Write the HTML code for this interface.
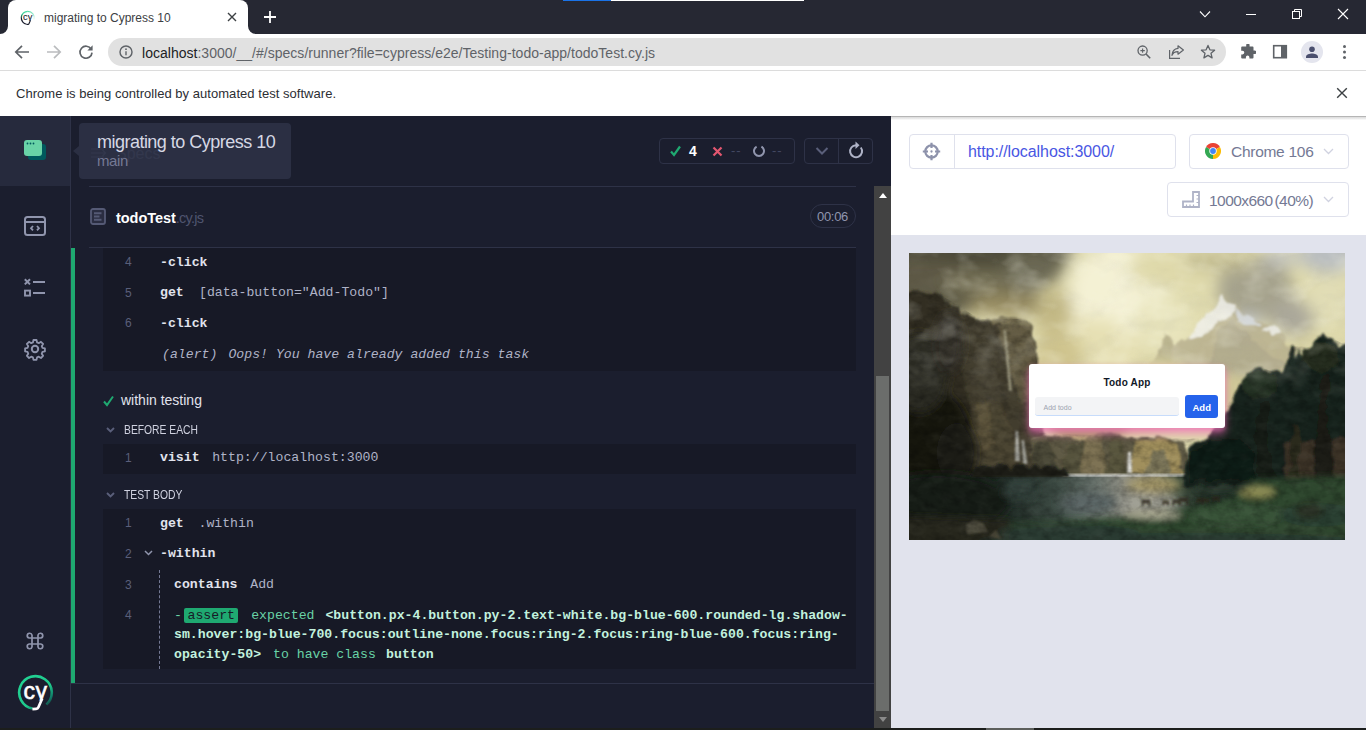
<!DOCTYPE html>
<html lang="en">
<head>
<meta charset="utf-8">
<title>migrating to Cypress 10</title>
<style>
*{box-sizing:border-box;margin:0;padding:0}
html,body{width:1366px;height:730px;overflow:hidden;background:#fff}
body{position:relative;font-family:"Liberation Sans",sans-serif;color:#202124}
.a{position:absolute}
.t{position:absolute;white-space:nowrap;line-height:1}
.mono{font-family:"Liberation Mono",monospace;font-size:13px}
/* chrome frame */
#titlebar{left:0;top:0;width:1366px;height:34px;background:#262833}
#tab{left:8px;top:0;width:240px;height:34px;background:#fff;border-radius:8px 8px 0 0}
#toolbar{left:0;top:34px;width:1366px;height:37px;background:#fff;border-bottom:1px solid #dcdcdc}
#omni{left:108px;top:38px;width:1118px;height:28px;border-radius:14px;background:#e1e1e1}
#infobar{left:0;top:71px;width:1366px;height:45px;background:#fff}
/* cypress */
#nav{left:0;top:116px;width:71px;height:612px;background:#1b1e2e;border-right:1px solid #2e3247}
#navsel{left:0;top:116px;width:70px;height:70px;background:#262a3d}
#rep{left:71px;top:116px;width:820px;height:612px;background:#1b1e2e}
.blk{position:absolute;left:103px;width:753px;background:#171926}
.num{position:absolute;font-size:12px;color:#5a5f7a;line-height:1;font-family:"Liberation Sans",sans-serif}
.cmd{position:absolute;white-space:nowrap;line-height:1;font-family:"Liberation Mono",monospace;font-size:13.200px;color:#afb3c7}
.cmd b{color:#e1e3ed;font-weight:bold}
.hl{position:absolute;height:1px;background:#2e3247}
#aut{left:891px;top:116px;width:475px;height:612px;background:#e1e3ed}
#authead{left:891px;top:116px;width:475px;height:119px;background:#fff}
.box{position:absolute;border:1px solid #dfe1ec;border-radius:4px;background:#fff}
#bottom{left:0;top:727.500px;width:1366px;height:2.500px;background:#1c1e1c}
</style>
</head>
<body>
<!-- ===== Chrome title bar ===== -->
<div id="titlebar" class="a"></div>
<div class="a" style="left:563px;top:0;width:48px;height:1px;background:#1a73e8"></div>
<div class="a" style="left:611px;top:0;width:193px;height:1px;background:#fff"></div>
<div id="tab" class="a"></div>
<div id="toolbar" class="a"></div>
<div id="omni" class="a"></div>
<div id="infobar" class="a"></div>


<!-- tab curves -->
<svg class="a" style="left:0;top:26px" width="8" height="8"><path d="M8 0V8H0A8 8 0 0 0 8 0Z" fill="#fff"/></svg>
<svg class="a" style="left:248px;top:26px" width="8" height="8"><path d="M0 0V8H8A8 8 0 0 1 0 0Z" fill="#fff"/></svg>
<!-- favicon -->
<svg class="a" style="left:20.2px;top:9.5px" width="16" height="16" viewBox="0 0 40 40"><defs><linearGradient id="fv1" gradientUnits="userSpaceOnUse" x1="0" y1="36" x2="0" y2="3"><stop offset="0" stop-color="#1b1e2e"/><stop offset=".45" stop-color="#1b1e2e"/><stop offset=".8" stop-color="#3fd49a"/><stop offset="1" stop-color="#4fdaa4"/></linearGradient><linearGradient id="fv2" gradientUnits="userSpaceOnUse" x1="20" y1="3" x2="36" y2="24"><stop offset="0" stop-color="#4fdaa4"/><stop offset=".6" stop-color="#a8ecd3"/><stop offset="1" stop-color="#eefaf6"/></linearGradient><clipPath id="fvc"><rect x="0" y="0" width="40" height="27.5"/></clipPath></defs><path d="M16.67 35.55A16.3 16.3 0 0 1 19.5 3.2" fill="none" stroke="url(#fv1)" stroke-width="3"/><path d="M19.5 3.2A16.3 16.3 0 0 1 35.3 23.5" fill="none" stroke="url(#fv2)" stroke-width="3"/><text y="25.5" font-family="Liberation Sans, sans-serif" font-size="23" fill="#1b1e2e" stroke="#1b1e2e" stroke-width=".3" clip-path="url(#fvc)"><tspan x="7.4">c</tspan><tspan x="19.5">y</tspan></text><path d="M26.2 25.5L22.4 34.3Q21.8 35.7 20.2 35.8L16.4 36.1" fill="none" stroke="#1b1e2e" stroke-width="2.8" stroke-linejoin="round"/></svg>
<div id="tabtitle" class="t" style="left:44px;top:11.500px;font-size:12px;color:#3c4043">migrating to Cypress 10</div>
<svg class="a" style="left:227px;top:12px" width="10" height="10" viewBox="0 0 10 10"><path d="M1 1L9 9M9 1L1 9" stroke="#3c4043" stroke-width="1.4" fill="none"/></svg>
<svg class="a" style="left:263px;top:10px" width="14" height="14" viewBox="0 0 14 14"><path d="M7 1V13M1 7H13" stroke="#fff" stroke-width="1.8" fill="none"/></svg>
<!-- window controls -->
<svg class="a" style="left:1199px;top:10px" width="12" height="9" viewBox="0 0 12 9"><path d="M1 1.5L6 6.8L11 1.5" stroke="#fff" stroke-width="1.1" fill="none"/></svg>
<div class="a" style="left:1246px;top:14px;width:10px;height:1px;background:#fff"></div>
<svg class="a" style="left:1291px;top:8px" width="12" height="12" viewBox="0 0 12 12"><rect x="1.5" y="3.5" width="7" height="7" fill="none" stroke="#fff" stroke-width="1"/><path d="M3.5 3.5V1.5H10.5V8.5H8.5" fill="none" stroke="#fff" stroke-width="1"/></svg>
<svg class="a" style="left:1337px;top:8px" width="12" height="12" viewBox="0 0 12 12"><path d="M1 1L11 11M11 1L1 11" stroke="#fff" stroke-width="1.1" fill="none"/></svg>
<!-- nav buttons -->
<svg class="a" style="left:14px;top:44px" width="16" height="16" viewBox="0 0 16 16"><path d="M15 8H2.2M8 1.8L1.8 8L8 14.2" stroke="#5f6368" stroke-width="1.7" fill="none"/></svg>
<svg class="a" style="left:46px;top:44px" width="16" height="16" viewBox="0 0 16 16"><path d="M1 8H13.8M8 1.8L14.2 8L8 14.2" stroke="#babcbe" stroke-width="1.7" fill="none"/></svg>
<svg class="a" style="left:78px;top:44px" width="16" height="16" viewBox="0 0 16 16"><path d="M13.2 5.2A6 6 0 1 0 14 8.6" stroke="#5f6368" stroke-width="1.7" fill="none"/><path d="M14.6 1.2V6.4H9.4Z" fill="#5f6368"/></svg>
<!-- omnibox -->
<svg class="a" style="left:118.700px;top:45px" width="14" height="14" viewBox="0 0 14 14"><circle cx="7" cy="7" r="6" fill="none" stroke="#5f6368" stroke-width="1.45"/><path d="M7 6.2V10.2" stroke="#5f6368" stroke-width="1.4"/><circle cx="7" cy="4.2" r=".9" fill="#5f6368"/></svg>
<div id="url" class="t" style="left:142px;top:45.5px;font-size:14px;letter-spacing:.02px;color:#5f6368"><span style="color:#202124">localhost</span>:3000/__/#/specs/runner?file=cypress/e2e/Testing-todo-app/todoTest.cy.js</div>
<svg class="a" style="left:1137px;top:45px" width="14" height="14" viewBox="0 0 14 14"><circle cx="5.6" cy="5.6" r="4.6" fill="none" stroke="#5f6368" stroke-width="1.3"/><path d="M9 9L13.2 13.2" stroke="#5f6368" stroke-width="1.6"/><path d="M5.6 3.4V7.8M3.4 5.6H7.8" stroke="#5f6368" stroke-width="1.1"/></svg>
<svg class="a" style="left:1168px;top:44px" width="17" height="16" viewBox="0 0 17 16"><path d="M1.6 6V14.4H12" fill="none" stroke="#5f6368" stroke-width="1.2"/><path d="M10 1.8L15.4 6L10 10.2V7.6C6.6 7.6 4.8 9 4 11.4C4.2 7.4 6.4 4.8 10 4.4Z" fill="none" stroke="#5f6368" stroke-width="1.2" stroke-linejoin="round"/></svg>
<svg class="a" style="left:1200px;top:44px" width="16" height="15" viewBox="0 0 16 15"><path d="M8 1.4L9.9 5.8L14.6 6.2L11 9.3L12.1 13.9L8 11.4L3.9 13.9L5 9.3L1.4 6.2L6.1 5.8Z" fill="none" stroke="#5f6368" stroke-width="1.3" stroke-linejoin="round"/></svg>
<!-- extension / sidepanel / profile / menu -->
<svg class="a" style="left:1240px;top:44px" width="16" height="16" viewBox="0 0 16 16"><path d="M6.2 1.2a1.7 1.7 0 0 1 3.4 0V2.6h3a.9.9 0 0 1 .9.9v3h1.1a1.75 1.75 0 0 1 0 3.5H13.5v3.6a.9.9 0 0 1-.9.9H9.4v-1.2a1.75 1.75 0 0 0-3.5 0v1.2H2.1a.9.9 0 0 1-.9-.9V10.4h1.3a1.8 1.8 0 0 0 0-3.6H1.2V3.5a.9.9 0 0 1 .9-.9h4.1Z" fill="#5f6368"/></svg>
<svg class="a" style="left:1272px;top:44px" width="16" height="16" viewBox="0 0 16 16"><rect x="1.7" y="1.7" width="12.6" height="12" fill="none" stroke="#5f6368" stroke-width="1.6"/><rect x="9" y="1.7" width="5.3" height="12" fill="#5f6368"/></svg>
<div class="a" style="left:1301px;top:41px;width:22px;height:22px;border-radius:11px;background:#e4e5ee"></div>
<svg class="a" style="left:1305px;top:45px" width="14" height="14" viewBox="0 0 14 14"><circle cx="7" cy="4.2" r="2.8" fill="#4a4f6e"/><path d="M1 13V11.6C1 9.4 4.6 8.4 7 8.4S13 9.4 13 11.6V13Z" fill="#4a4f6e"/></svg>
<div class="a" style="left:1343px;top:45px;width:3px;height:3px;border-radius:2px;background:#5f6368;box-shadow:0 5.5px 0 #5f6368,0 11px 0 #5f6368"></div>
<!-- infobar -->
<div id="infotxt" class="t" style="left:16px;top:86.7px;font-size:13px;letter-spacing:.04px;color:#2c2e33">Chrome is being controlled by automated test software.</div>
<svg class="a" style="left:1336px;top:87px" width="12" height="12" viewBox="0 0 12 12"><path d="M1.2 1.2L10.8 10.8M10.8 1.2L1.2 10.8" stroke="#3c4043" stroke-width="1.4" fill="none"/></svg>

<!-- ===== Cypress app ===== -->
<div id="nav" class="a"></div>
<div id="navsel" class="a"></div>
<div id="rep" class="a"></div>

<!-- nav icons -->
<svg class="a" style="left:23px;top:139px" width="24" height="24" viewBox="0 0 24 24"><rect x="5" y="5" width="18" height="16" rx="3" fill="#00595d"/><rect x="1" y="1" width="18" height="16" rx="3" fill="#69d3a7"/><circle cx="4.5" cy="4.5" r=".9" fill="#00595d"/><circle cx="7.5" cy="4.5" r=".9" fill="#00595d"/><circle cx="10.5" cy="4.5" r=".9" fill="#00595d"/></svg>
<svg class="a" style="left:23px;top:214px" width="24" height="24" viewBox="0 0 24 24"><rect x="2" y="3" width="20" height="18" rx="2.5" fill="none" stroke="#9095ad" stroke-width="2"/><path d="M2 8H22" stroke="#9095ad" stroke-width="2"/><path d="M10 12L8 14.2L10 16.4M14 12L16 14.2L14 16.4" fill="none" stroke="#9095ad" stroke-width="1.8"/></svg>
<svg class="a" style="left:23px;top:276px" width="24" height="24" viewBox="0 0 24 24"><path d="M1.8 3.2L7 8.4M7 3.2L1.8 8.4" stroke="#9095ad" stroke-width="2" fill="none"/><rect x="2" y="14.6" width="5" height="5" fill="none" stroke="#9095ad" stroke-width="1.9"/><path d="M10 6H22M10 17H22" stroke="#9095ad" stroke-width="2" fill="none"/></svg>
<svg class="a" style="left:23px;top:337px" width="24" height="24" viewBox="0 0 24 24"><path d="M10.3 2h3.4l.6 2.7 1.9.8 2.4-1.5 2.4 2.4-1.5 2.4.8 1.9 2.7.6v3.4l-2.7.6-.8 1.9 1.5 2.4-2.4 2.4-2.4-1.5-1.9.8-.6 2.7h-3.4l-.6-2.7-1.9-.8-2.4 1.5-2.4-2.4 1.5-2.4-.8-1.9L1 14.7v-3.4l2.700-.6.800-1.900-1.500-2.400 2.400-2.400 2.400 1.500 1.900-.8Z" transform="translate(1.2,1.2) scale(.9)" fill="none" stroke="#9095ad" stroke-width="2" stroke-linejoin="round"/><circle cx="12" cy="12" r="3.2" fill="none" stroke="#9095ad" stroke-width="2"/></svg>
<svg class="a" style="left:25px;top:631px" width="20" height="20" viewBox="0 0 20 20"><path d="M7 7V4.200A2.400 2.400 0 1 0 4.200 7H15.800A2.400 2.400 0 1 0 13 4.200V15.800A2.400 2.400 0 1 0 15.800 13H4.200A2.400 2.400 0 1 0 7 15.800Z" fill="none" stroke="#9095ad" stroke-width="1.7"/></svg>
<svg class="a" style="left:16px;top:673px" width="40" height="40" viewBox="0 0 40 40"><defs><linearGradient id="cyg" gradientUnits="userSpaceOnUse" x1="6" y1="4" x2="33" y2="34"><stop offset="0" stop-color="#22d494"/><stop offset=".62" stop-color="#1fc98c"/><stop offset=".86" stop-color="#0f7a66"/><stop offset="1" stop-color="#1b2e33"/></linearGradient></defs><path d="M16.670 35.550A16.300 16.300 0 1 1 30.400 31.600" fill="none" stroke="url(#cyg)" stroke-width="2.600"/><clipPath id="cyc"><rect x="0" y="0" width="40" height="27.500"/></clipPath><text y="25.500" font-family="Liberation Sans, sans-serif" font-size="23" fill="#fff" stroke="#fff" stroke-width=".6" clip-path="url(#cyc)"><tspan x="7.400">c</tspan><tspan x="19.500">y</tspan></text><path d="M26.200 25.500L22.400 34.300Q21.800 35.700 20.200 35.800L16.400 36.100" fill="none" stroke="#fff" stroke-width="2.700" stroke-linejoin="round"/></svg>

<!-- reporter header (behind tooltip) -->
<svg class="a" style="left:91px;top:146px" width="16" height="14" viewBox="0 0 16 14"><path d="M0 3H13M0 7H14.500M0 11H13M11.500 4L14.500 7L11.500 10" stroke="#5a5f7a" stroke-width="1.2" fill="none"/></svg>
<div id="specs" class="t" style="left:116px;top:146px;font-size:16px;color:#5a5f7a">Specs</div>
<!-- tooltip -->
<div class="a" style="left:79px;top:123px;width:212px;height:56px;border-radius:4px;background:rgba(46,50,71,.88)"></div>
<svg class="a" style="left:73px;top:146px" width="6" height="10"><path d="M6 0V10L0 5Z" fill="#2b2f43"/></svg>
<div id="tt1" class="t" style="left:97px;top:133px;font-size:18px;letter-spacing:-.52px;color:#d6d8e4">migrating to Cypress 10</div>
<div id="tt2" class="t" style="left:97px;top:153px;font-size:15px;letter-spacing:-.4px;color:#747994">main</div>

<!-- stats -->
<div class="a" style="left:659px;top:138px;width:136px;height:26px;border:1px solid #2e3247;border-radius:4px"></div>
<svg class="a" style="left:670px;top:145px" width="11" height="12" viewBox="0 0 11 12"><path d="M1 6.500L4 10L10 1.500" stroke="#1fa971" stroke-width="2.200" fill="none"/></svg>
<div id="st4" class="t" style="left:689px;top:144px;font-size:14px;font-weight:bold;color:#fff">4</div>
<svg class="a" style="left:712px;top:146px" width="11" height="11" viewBox="0 0 11 11"><path d="M1.500 1.500L9.500 9.500M9.500 1.500L1.500 9.500" stroke="#e45770" stroke-width="2.200" fill="none"/></svg>
<div class="t" style="left:731px;top:144px;font-size:13px;color:#434861;letter-spacing:1px">--</div>
<svg class="a" style="left:752px;top:144px" width="14" height="14" viewBox="0 0 14 14"><path d="M4.600 2.600A5 5 0 1 0 9.400 2.600" stroke="#9095ad" stroke-width="2" fill="none"/></svg>
<div class="t" style="left:772px;top:144px;font-size:13px;color:#434861;letter-spacing:1px">--</div>
<div class="a" style="left:804px;top:138px;width:69px;height:26px;border:1px solid #2e3247;border-radius:4px"></div>
<div class="a" style="left:838px;top:138px;width:1px;height:26px;background:#2e3247"></div>
<svg class="a" style="left:815px;top:146px" width="14" height="10" viewBox="0 0 14 10"><path d="M1.500 2L7 7.500L12.500 2" stroke="#5a5f7a" stroke-width="2" fill="none"/></svg>
<svg class="a" style="left:848px;top:141px" width="16" height="18" viewBox="0 0 16 18"><path d="M12.800 6.500A6 6 0 1 1 8 4.200" stroke="#afb3c7" stroke-width="2" fill="none"/><path d="M7.500 .5L11.500 4.200L7.500 8Z" fill="#afb3c7"/></svg>

<div class="hl" style="left:89px;top:186px;width:767px"></div>
<!-- spec file row -->
<svg class="a" style="left:90px;top:208px" width="16" height="17" viewBox="0 0 16 17"><rect x="1" y="1" width="14" height="15" rx="2" fill="#2a2d41" stroke="#555a75" stroke-width="1.800"/><path d="M4 5.300H11.500M4 8.500H9.500M4 11.700H11.500" stroke="#555a75" stroke-width="1.900"/></svg>
<div id="specname" class="t" style="left:116px;top:211px;font-size:14px;color:#5a5f7a"><b style="color:#fff;font-size:14.500px;letter-spacing:-.05px">todoTest</b><span style="font-size:14.500px;letter-spacing:-.75px;color:#4f546e">.cy.js</span></div>
<div class="a" style="left:810px;top:204px;width:46px;height:24px;border:1px solid #2e3247;border-radius:12px"></div>
<div id="time" class="t" style="left:817px;top:210px;font-size:13px;letter-spacing:-.3px;color:#9095ad">00:06</div>
<div class="hl" style="left:89px;top:247px;width:767px"></div>

<!-- command log -->
<div class="blk" style="top:248px;height:123px"></div>
<div class="num" style="left:125px;top:256.0px">4</div>
<div class="cmd" style="left:160px;top:255.5px;"><b>-click</b></div>
<div class="num" style="left:125px;top:286.5px">5</div>
<div class="cmd" style="left:160px;top:286.0px;"><b>get</b> <span style="margin-left:7.300px">[data-button="Add-Todo"]</span></div>
<div class="num" style="left:125px;top:317.0px">6</div>
<div class="cmd" style="left:160px;top:316.5px;"><b>-click</b></div>
<div class="cmd" style="left:162px;top:347.5px;font-style:italic">(alert) <span style="margin-left:3.100px">Oops! You have already added this task</span></div>
<svg class="a" style="left:103px;top:395px" width="11" height="12" viewBox="0 0 11 12"><path d="M1 6.500L4 10L10 1.500" stroke="#1fa971" stroke-width="2" fill="none"/></svg>
<div id="wt" class="t" style="left:121px;top:393px;font-size:14px;color:#e1e3ed">within testing</div>
<svg class="a" style="left:105.5px;top:427px" width="9" height="6" viewBox="0 0 9 6"><path d="M1 1L4.500 4.500L8 1" stroke="#5a5f7a" stroke-width="1.900" fill="none"/></svg>
<div id="be" class="t" style="left:123.5px;top:423.5px;font-size:12.6px;color:#d0d2e0;transform:scaleX(.82);transform-origin:0 0">BEFORE EACH</div>
<div class="blk" style="top:444px;height:30px"></div>
<div class="num" style="left:125px;top:451.5px">1</div>
<div class="cmd" style="left:160px;top:451.0px;"><b>visit</b> <span style="margin-left:4.700px">http://localhost:3000</span></div>
<svg class="a" style="left:105.5px;top:492px" width="9" height="6" viewBox="0 0 9 6"><path d="M1 1L4.500 4.500L8 1" stroke="#5a5f7a" stroke-width="1.900" fill="none"/></svg>
<div id="tb" class="t" style="left:123.5px;top:488.5px;font-size:12.6px;color:#d0d2e0;transform:scaleX(.82);transform-origin:0 0">TEST BODY</div>
<div class="blk" style="top:509px;height:160px"></div>
<div class="num" style="left:125px;top:517.0px">1</div>
<div class="cmd" style="left:160px;top:516.5px;"><b>get</b> <span style="margin-left:6.800px">.within</span></div>
<div class="num" style="left:125px;top:547.5px">2</div>
<svg class="a" style="left:143.5px;top:550px" width="9" height="6" viewBox="0 0 9 6"><path d="M1 1L4.500 4.500L8 1" stroke="#9095ad" stroke-width="1.500" fill="none"/></svg>
<div class="cmd" style="left:160px;top:547.0px;"><b>-within</b></div>
<div class="a" style="left:159px;top:570px;width:0;height:99px;border-left:1px dashed #747994"></div>
<div class="num" style="left:125px;top:578.5px">3</div>
<div class="cmd" style="left:174px;top:578.0px;"><b>contains</b> <span style="margin-left:5px">Add</span></div>
<div class="num" style="left:125px;top:609.0px">4</div>
<div class="a" style="left:184px;top:608px;width:54px;height:15px;border-radius:2px;background:#1fa971"></div>
<div class="cmd" style="left:174px;top:608.5px;"><span style="color:#69d3a7">-</span><span style="color:#171926;margin-left:5.600px">assert</span><span style="color:#69d3a7;margin-left:16.200px">expected</span> <b style="margin-left:3px;color:#c2f1de">&lt;button.px-4.button.py-2.text-white.bg-blue-600.rounded-lg.shadow-</b></div>
<div class="cmd" style="left:174px;top:628.0px;"><b style="color:#c2f1de">sm.hover:bg-blue-700.focus:outline-none.focus:ring-2.focus:ring-blue-600.focus:ring-</b></div>
<div class="cmd" style="left:174px;top:647.5px;"><b style="color:#c2f1de">opacity-50&gt;</b> <span style="color:#69d3a7;margin-left:4px">to have class</span> <b style="margin-left:2.300px;color:#c2f1de">button</b></div>

<!-- green bar -->
<div class="a" style="left:71px;top:248px;width:4px;height:436px;background:#1fa971"></div>
<div class="hl" style="left:71px;top:683px;width:804px"></div>

<!-- scrollbar -->
<div class="a" style="left:874px;top:186px;width:17px;height:542px;background:#424242"></div>
<div class="a" style="left:876px;top:376px;width:13px;height:335px;background:#6b6d6b"></div>
<svg class="a" style="left:878.500px;top:192.500px" width="8" height="5"><path d="M0 5L4 0L8 5Z" fill="#fff"/></svg>
<svg class="a" style="left:878.500px;top:716.500px" width="8" height="5"><path d="M0 0L4 5L8 0Z" fill="#8a8a8a"/></svg>

<div id="aut" class="a"></div>
<div id="authead" class="a"></div>

<!-- AUT header -->
<div class="box" style="left:909px;top:134px;width:267px;height:35px"></div>
<div class="a" style="left:954px;top:135px;width:1px;height:33px;background:#dfe1ec"></div>
<svg class="a" style="left:922px;top:142.400px" width="19" height="19" viewBox="0 0 19 19"><circle cx="9.500" cy="9.500" r="6.200" fill="none" stroke="#8d92ab" stroke-width="2.200"/><path d="M9.500 .8V6M9.500 13V18.200M.8 9.500H6M13 9.500H18.200" stroke="#8d92ab" stroke-width="2.200"/><circle cx="9.500" cy="9.500" r="1.150" fill="#8d92ab"/></svg>
<div id="auturl" class="t" style="left:968px;top:144px;font-size:16px;letter-spacing:-.07px;color:#4956e3">http://localhost:3000/</div>
<div class="box" style="left:1189px;top:134px;width:160px;height:35px"></div>
<svg class="a" style="left:1205px;top:143px" width="16" height="16" viewBox="0 0 16 16"><circle cx="8" cy="8" r="8" fill="#fff"/><path d="M8 8L1.070 4A8 8 0 0 1 14.930 4Z" fill="#ea4335"/><path d="M8 8L14.930 4A8 8 0 0 1 8 16Z" fill="#fbbc04"/><path d="M8 8L8 16A8 8 0 0 1 1.070 4Z" fill="#34a853"/><circle cx="8" cy="8" r="3.700" fill="#fff"/><circle cx="8" cy="8" r="2.900" fill="#4285f4"/></svg>
<div id="chr" class="t" style="left:1231px;top:143.500px;font-size:15.500px;letter-spacing:-.28px;color:#747994">Chrome 106</div>
<svg class="a" style="left:1323px;top:148px" width="11" height="7" viewBox="0 0 11 7"><path d="M1 1L5.500 5.500L10 1" stroke="#d0d2e0" stroke-width="1.300" fill="none"/></svg>
<div class="box" style="left:1167px;top:182px;width:182px;height:35px"></div>
<svg class="a" style="left:1182px;top:191px" width="18" height="17" viewBox="0 0 18 17"><path d="M1 16V10.500H11V1H17V16Z" fill="none" stroke="#afb3c7" stroke-width="1.800"/><path d="M4.500 16V13.500M8 16V13.500M11.500 16V13.500M17 4.500H14.500M17 8H14.500M17 11.500H14.500" stroke="#afb3c7" stroke-width="1.200"/></svg>
<div id="vp" class="t" style="left:1209px;top:192.500px;font-size:15.500px;letter-spacing:-.55px;color:#747994">1000x660 <span style="margin-left:-2px">(40%)</span></div>
<svg class="a" style="left:1323px;top:196px" width="11" height="7" viewBox="0 0 11 7"><path d="M1 1L5.500 5.500L10 1" stroke="#d0d2e0" stroke-width="1.300" fill="none"/></svg>
<!-- AUT viewport -->
<div id="paint" class="a" style="left:909px;top:253px;width:436px;height:287px;background:#4a4a35;overflow:hidden"><svg width="436" height="287" viewBox="0 0 436 287" style="position:absolute;left:0;top:0"><defs>
<filter id="b8" x="-30%" y="-30%" width="160%" height="160%"><feGaussianBlur stdDeviation="8"/></filter>
<filter id="b5" x="-30%" y="-30%" width="160%" height="160%"><feGaussianBlur stdDeviation="5"/></filter>
<filter id="b3" x="-30%" y="-30%" width="160%" height="160%"><feGaussianBlur stdDeviation="3"/></filter>
<filter id="b2" x="-20%" y="-20%" width="140%" height="140%"><feGaussianBlur stdDeviation="1.6"/></filter>
<filter id="b1" x="-20%" y="-20%" width="140%" height="140%"><feGaussianBlur stdDeviation="0.8"/></filter>
<filter id="tx" x="0" y="0" width="100%" height="100%"><feTurbulence type="fractalNoise" baseFrequency=".09 .12" numOctaves="3" seed="7" result="n"/><feColorMatrix in="n" type="matrix" values="0 0 0 0 0  0 0 0 0 0  0 0 0 0 0  1.6 0 0 0 -.62"/></filter>
<filter id="tx2" x="0" y="0" width="100%" height="100%"><feTurbulence type="fractalNoise" baseFrequency=".06 .1" numOctaves="3" seed="23" result="n"/><feColorMatrix in="n" type="matrix" values="0 0 0 0 1  0 0 0 0 1  0 0 0 0 .9  1.5 0 0 0 -.62"/></filter>
<filter id="tx3" x="0" y="0" width="100%" height="100%"><feTurbulence type="fractalNoise" baseFrequency=".035 .05" numOctaves="3" seed="11" result="n"/><feColorMatrix in="n" type="matrix" values="0 0 0 0 .35  0 0 0 0 .34  0 0 0 0 .28  2.2 0 0 0 -1"/></filter>
<filter id="tx4" x="0" y="0" width="100%" height="100%"><feTurbulence type="fractalNoise" baseFrequency=".03 .045" numOctaves="3" seed="31" result="n"/><feColorMatrix in="n" type="matrix" values="0 0 0 0 1  0 0 0 0 1  0 0 0 0 .88  2.2 0 0 0 -1"/></filter>
<filter id="d2" x="-10%" y="-10%" width="120%" height="120%"><feTurbulence type="fractalNoise" baseFrequency=".08" numOctaves="3" seed="3" result="n"/><feDisplacementMap in="SourceGraphic" in2="n" scale="9" xChannelSelector="R" yChannelSelector="G" result="d"/><feGaussianBlur in="d" stdDeviation="1.1"/></filter>
<linearGradient id="lake" x1="0" y1="0" x2="1" y2="0"><stop offset="0" stop-color="#0f1411"/><stop offset=".2" stop-color="#172019"/><stop offset=".32" stop-color="#222e28"/><stop offset=".45" stop-color="#3f4d46"/><stop offset=".54" stop-color="#66706a"/><stop offset=".62" stop-color="#8d8d82"/><stop offset=".7" stop-color="#8a866e"/><stop offset=".76" stop-color="#3c4c3c"/><stop offset=".85" stop-color="#1f2c24"/><stop offset="1" stop-color="#1f2c24"/></linearGradient>
</defs><rect width="436" height="287" fill="#e0dbae"/><g filter="url(#b8)" ><path d="M-40 -40L170 -40L160 6L140 30L120 44L60 60L-40 70Z" fill="#5a5743" /><ellipse cx="40" cy="0" rx="120" ry="14" fill="#4b4939" /><ellipse cx="10" cy="22" rx="50" ry="16" fill="#5d5944" /><ellipse cx="70" cy="30" rx="36" ry="12" fill="#757055" /><ellipse cx="124" cy="16" rx="30" ry="18" fill="#6b6852" /><ellipse cx="100" cy="52" rx="40" ry="12" fill="#978c62" /><ellipse cx="150" cy="62" rx="22" ry="26" fill="#c2b884" /><ellipse cx="208" cy="40" rx="48" ry="50" fill="#f4f1d4" /><ellipse cx="185" cy="100" rx="45" ry="35" fill="#e6e0b4" /><ellipse cx="150" cy="104" rx="25" ry="28" fill="#cfc48e" /><ellipse cx="262" cy="16" rx="44" ry="18" fill="#dfd9aa" /><ellipse cx="255" cy="70" rx="30" ry="30" fill="#e8e4bc" /><ellipse cx="346" cy="36" rx="38" ry="32" fill="#a6a38d" /><ellipse cx="384" cy="64" rx="24" ry="18" fill="#aaa79a" /><ellipse cx="310" cy="8" rx="36" ry="10" fill="#c2bc90" /><ellipse cx="420" cy="2" rx="30" ry="18" fill="#b9bdc0" /><ellipse cx="372" cy="4" rx="20" ry="8" fill="#c4c6c4" /><ellipse cx="420" cy="48" rx="22" ry="22" fill="#e1ddb6" /><ellipse cx="404" cy="100" rx="40" ry="14" fill="#d4ce9e" /><ellipse cx="340" cy="70" rx="10" ry="10" fill="#c8ccd0" /></g><g filter="url(#d2)" opacity=".82"><path d="M236 125L250 96L256 80L262 84L268 92L282 82L296 62L306 54L314 40L319 50L326 51L332 60L346 66L356 70L365 72L372 80L382 95L400 106L420 112L420 150L236 150Z" fill="#b7af8e" /><path d="M278 86L296 62L306 54L314 40L319 50L326 52L322 64L312 68L303 74L292 82Z" fill="#f1f1ee" /><path d="M324 54L332 60L346 66L352 72L340 72L330 68Z" fill="#d9dde0" /><path d="M354 76L365 71L372 80L364 82Z" fill="#ebebe8" /><path d="M246 110L256 82L264 90L262 116Z" fill="#b0a984" /><path d="M296 120L312 72L324 68L336 80L352 98L380 112L330 128Z" fill="#aaa388" /></g><g filter="url(#b5)" ><ellipse cx="215" cy="150" rx="70" ry="30" fill="#d0c48c" /><ellipse cx="300" cy="140" rx="60" ry="20" fill="#cfc796" /><ellipse cx="180" cy="170" rx="40" ry="22" fill="#ab9d6a" /><ellipse cx="250" cy="120" rx="30" ry="14" fill="#d9d2a2" /></g><g filter="url(#d2)" ><path d="M110 200L120 186L135 182L160 184L180 188L200 180L216 184L240 184L262 186L276 190L282 224L110 224Z" fill="#5f5a44" /><path d="M118 222L126 190L142 186L150 222Z" fill="#4c4a38" /><path d="M150 222L158 192L176 188L184 222Z" fill="#57523c" /><path d="M172 222L176 186L192 182L200 222Z" fill="#7d7252" /><path d="M198 222L202 182L214 186L220 222Z" fill="#58543e" /><path d="M222 222L226 188L250 186L270 192L274 222Z" fill="#a08f5c" /><path d="M236 222L244 198L256 198L262 222Z" fill="#7d775a" /></g><g filter="url(#d2)" ><path d="M-20 39L14 39L30 41L40 50L50 53L56 62L70 66L84 65L118 66L123 72L126 90L128 108L130 150L124 180L122 200L130 224L-20 224Z" fill="#433e2f" /><path d="M84 65L118 66L123 72L100 72L86 70Z" fill="#7b7354" /><path d="M-20 39L14 39L30 41L40 50L50 53L54 110L60 150L64 224L-20 224Z" fill="#322f24" /><path d="M88 72L122 72L127 108L128 150L112 150L100 110Z" fill="#625a42" /><path d="M62 150L70 146L90 150L104 176L106 210L100 222L66 222Z" fill="#4c4430" /><path d="M66 152L80 150L84 190L72 200Z" fill="#5c533b" /><path d="M56 62L70 66L80 120L76 150L62 150L56 100Z" fill="#423e2e" /><path d="M118 150L130 150L134 184L120 186Z" fill="#4b4636" /></g><g filter="url(#b5)" ><ellipse cx="22" cy="185" rx="40" ry="50" fill="#15150f" /><ellipse cx="10" cy="120" rx="30" ry="40" fill="#2c2a20" /><ellipse cx="48" cy="200" rx="20" ry="30" fill="#1e1e17" /><ellipse cx="40" cy="90" rx="14" ry="30" fill="#34312a" /></g><g filter="url(#b1)" ><path d="M94.5 77L97 77L103 138L100 138Z" fill="#9c987f" /><path d="M106.5 178L109 178L111 208L106 208Z" fill="#b4b4ac" /><path d="M112.5 187L115 187L118.5 211L114 211Z" fill="#9e9e96" /><path d="M219 199L222 199L223 220L218 220Z" fill="#e8e8e2" /><path d="M219 226L222 226L223 240L219 240Z" fill="#d2d2cc" /></g><rect x="-20" y="222" width="380" height="70" fill="url(#lake)"/><g filter="url(#b5)" ><ellipse cx="245" cy="232" rx="28" ry="7" fill="#a79a68" /><ellipse cx="240" cy="250" rx="36" ry="8" fill="#a3a398" /><ellipse cx="180" cy="250" rx="30" ry="10" fill="#5c6666" /><ellipse cx="30" cy="250" rx="70" ry="30" fill="#161b17" /><ellipse cx="110" cy="236" rx="16" ry="12" fill="#33403a" /><ellipse cx="312" cy="234" rx="30" ry="9" fill="#26342b" /></g><g filter="url(#b1)" ><path d="M154 221L300 221L300 223.5L154 223.5Z" fill="#cfd0cc" /></g><g filter="url(#b1)" ><path d="M62 223L66 214L74 212L84 214L90 210L98 212L102 218L106 212L114 211L120 216L126 211L132 216L138 212L146 213L150 217L156 215L160 222L160 224L62 224Z" fill="#1a1e17" /></g><g filter="url(#d2)" ><path d="M274 226L278 200L286 190L300 184L306 172L316 162L324 150L330 132L338 120L348 114L356 118L366 116L374 122L378 104L382 93L387 104L392 96L396 108L400 94L408 84L416 81L424 86L430 96L436 92L460 92L460 232L274 232Z" fill="#19231a" /><path d="M376 190L460 184L460 226L376 226Z" fill="#3b3026" /><path d="M278 228L282 200L300 188L330 186L344 200L346 226Z" fill="#111a14" /><path d="M350 224L346 180L352 150L360 150L358 190L366 224Z" fill="#161c14" /><path d="M404 232L410 150L414 120L420 120L418 170L428 232Z" fill="#1a1e15" /><path d="M380 224L384 170L390 170L390 224Z" fill="#2a2a1e" /><ellipse cx="412" cy="104" rx="18" ry="14" fill="#202c1b" /><ellipse cx="350" cy="132" rx="18" ry="14" fill="#1e291b" /></g><g filter="url(#b3)" ><path d="M346 226L460 222L460 310L80 310L96 270L180 266L250 261L292 252L324 244Z" fill="#2f472f" /><path d="M-20 262L100 266L110 310L-20 310Z" fill="#26281f" /><ellipse cx="348" cy="239" rx="18" ry="6" fill="#8a8a52" /><ellipse cx="330" cy="262" rx="50" ry="10" fill="#385238" /><ellipse cx="410" cy="262" rx="40" ry="12" fill="#2c4030" /><ellipse cx="160" cy="280" rx="70" ry="9" fill="#2b3a31" /><ellipse cx="244" cy="262" rx="28" ry="4" fill="#a5a58e" /><ellipse cx="400" cy="258" rx="14" ry="8" fill="#2a3226" /><ellipse cx="270" cy="291" rx="200" ry="11" fill="#2b3a33" /></g><g filter="url(#b1)" ><path d="M57 272L64 267L74 270L79 279L58 281Z" fill="#4e4c3c" /><path d="M80 284L87 277L92 286Z" fill="#474536" /></g><clipPath id="land"><path d="M0 39L30 41L50 53L70 66L118 66L128 108L130 180L280 186L300 184L330 132L350 114L374 122L382 93L400 94L416 81L436 92V287H0Z"/></clipPath><g clip-path="url(#land)"><rect width="436" height="287" filter="url(#tx)" opacity=".34"/><rect width="436" height="287" filter="url(#tx2)" opacity=".05"/></g><linearGradient id="skf" x1="0" y1="0" x2="0" y2="1"><stop offset="0" stop-color="#fff"/><stop offset=".6" stop-color="#fff"/><stop offset="1" stop-color="#000"/></linearGradient><mask id="skm"><rect width="436" height="160" fill="url(#skf)"/></mask><g mask="url(#skm)"><rect width="436" height="160" filter="url(#tx3)" opacity=".1"/><rect width="436" height="160" filter="url(#tx4)" opacity=".3"/></g><g filter="url(#b1)" opacity=".8"><path d="M233 247h8v6h-1v-3h-6v3h-1z M233 247l-2 -3" fill="#2a2419" stroke="#2a2419" stroke-width=".8"/><path d="M254 248h5.6v4.2h-1v-2.1h-4.2v2.1h-1z M254 248l-1.4 -2.1" fill="#2a2419" stroke="#2a2419" stroke-width=".8"/><path d="M264 247h7.2v5.4h-1v-2.7h-5.4v2.7h-1z M264 247l-1.8 -2.7" fill="#2a2419" stroke="#2a2419" stroke-width=".8"/><path d="M270 245h8.8v6.6h-1v-3.3h-6.6v3.3h-1z M270 245l-2.2 -3.3" fill="#2a2419" stroke="#2a2419" stroke-width=".8"/><path d="M288 246h5.6v4.2h-1v-2.1h-4.2v2.1h-1z M288 246l-1.4 -2.1" fill="#2a2419" stroke="#2a2419" stroke-width=".8"/><path d="M294 246h5.6v4.2h-1v-2.1h-4.2v2.1h-1z M294 246l-1.4 -2.1" fill="#2a2419" stroke="#2a2419" stroke-width=".8"/><path d="M304 244h6.4v4.8h-1v-2.4h-4.8v2.4h-1z M304 244l-1.6 -2.4" fill="#2a2419" stroke="#2a2419" stroke-width=".8"/></g></svg>
<div class="a" style="left:120px;top:111px;width:196px;height:64px;border-radius:3px;background:#fff;box-shadow:0 6px 8px 0px rgba(240,110,185,.62),0 2px 4px rgba(240,110,185,.4)"></div>
<div id="todo" class="t" style="left:194.500px;top:125px;font-size:10px;font-weight:bold;color:#111827;letter-spacing:.2px">Todo App</div>
<div class="a" style="left:126px;top:144px;width:144px;height:19px;border-radius:3px;background:#f3f4f6;border-bottom:1px solid #c7dcfb"></div>
<div id="ph" class="t" style="left:134.500px;top:150.800px;font-size:7px;color:#9ca3af">Add todo</div>
<div class="a" style="left:276px;top:142px;width:33px;height:23px;border-radius:3px;background:#2563eb"></div>
<div id="addb" class="t" style="left:283.500px;top:149.800px;font-size:9.500px;font-weight:bold;color:#fff">Add</div>
</div>

<div class="a" style="left:891px;top:116px;width:475px;height:4px;background:linear-gradient(#b2b2b2 0,#b8b8b8 25%,#dcdcdc 26%,#ececec 70%,#fff 100%)"></div>
<div id="bottom" class="a"></div>
<div class="a" style="left:986px;top:727.500px;width:48px;height:2.500px;background:#5c5f5c"></div>
</body>
</html>
